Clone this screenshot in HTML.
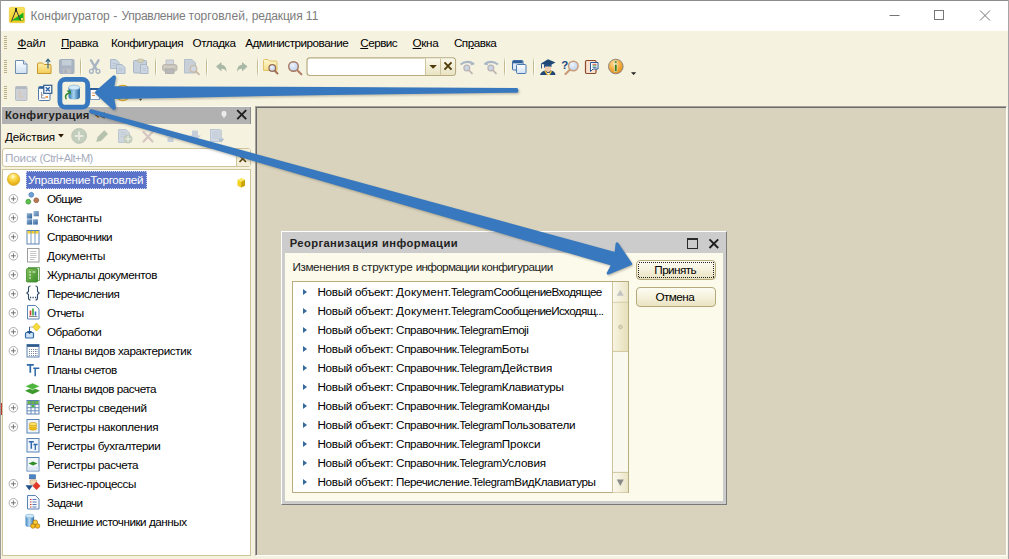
<!DOCTYPE html>
<html lang="ru">
<head>
<meta charset="utf-8">
<title>Конфигуратор</title>
<style>
*{box-sizing:border-box;margin:0;padding:0}
html,body{width:1009px;height:559px;overflow:hidden;background:#f5f2e0}
body{position:relative;font-family:"Liberation Sans","DejaVu Sans",sans-serif;font-size:11.7px;color:#000;-webkit-font-smoothing:antialiased}
.abs{position:absolute}
.t{position:absolute;white-space:nowrap;line-height:1}
#titlebar{left:0;top:0;width:1009px;height:31px;background:#fff}
#title{left:30.6px;top:9.8px;font-size:12px;color:#7c7c7c}
#wintop{left:0;top:0;width:1009px;height:1px;background:#8d8d8d}
#winleft{left:0;top:0;width:1px;height:559px;background:#9a9a9a}
#winright{left:1008px;top:0;width:1px;height:559px;background:#a5a5a5}
.menu{top:36.5px;font-size:11.7px;color:#000}
.menu u{text-decoration:underline;text-underline-offset:1px}
.grip{position:absolute;width:3px;background:repeating-linear-gradient(to bottom,#b9ae86 0,#b9ae86 1px,transparent 1px,transparent 2px)}
.sep{position:absolute;width:1px;background:linear-gradient(to bottom,rgba(196,186,142,0),#c4ba8e 25%,#c4ba8e 75%,rgba(196,186,142,0))}.sep:after{content:"";position:absolute;left:1px;top:0;width:1px;height:100%;background:linear-gradient(to bottom,rgba(255,255,250,0),#fffffa 25%,#fffffa 75%,rgba(255,255,250,0))}
#work{left:255px;top:106px;width:752px;height:450px;background:#d9d3bd;border-top:1px solid #a3a199;border-left:1px solid #a3a199;border-right:1px solid #fff;border-bottom:1px solid #fff;box-shadow:inset 1px 1px 0 #6b6b6b}
#phead{left:2px;top:107px;width:249px;height:17px;background:#b1b1b1}
#ptitle{left:5px;top:109.6px;font-size:11.2px;font-weight:bold;color:#222}
#search{left:2px;top:148px;width:249px;height:19px;background:#fff;border:1px solid #cfc59a;border-radius:3px}
#searchbtn{left:236px;top:149px;width:14px;height:17px;background:#f3efda;border-left:1px solid #cfc59a}
#ph{left:5px;top:152.3px;font-size:11.7px;color:#a6acbd}
#tree{left:2px;top:169px;width:249px;height:387px;background:#fff;border:1px solid #cfc59a}
.row{position:absolute;left:47px;font-size:11.7px;color:#000;white-space:nowrap;line-height:1}
#sel{left:26px;top:170.500px;width:121px;height:18.500px;background:#5a72c8;border:1px dotted #c9d0ee}
#dlg{left:281px;top:231px;width:446px;height:274px;background:#cccccc;border-top:1px solid #fff;border-left:1px solid #fff;border-right:1px solid #7c7c7c;border-bottom:1px solid #787878}
#dbody{left:285px;top:253px;width:438px;height:248px;background:#fcfaeb}
#dtitle{left:289.7px;top:238.4px;font-size:11.2px;font-weight:bold;color:#222}
#dlabel{left:292.4px;top:260.7px;font-size:11.7px;color:#222}
#list{left:292px;top:281px;width:337px;height:212px;background:#fff;border:1px solid #b9ad80}
.li{position:absolute;left:317.5px;font-size:11.7px;color:#000;white-space:nowrap;line-height:1}
.tri{position:absolute;left:303.2px;width:0;height:0;border-left:4.6px solid #366a9a;border-top:3.9px solid transparent;border-bottom:3.9px solid transparent}
.btn{position:absolute;left:636px;width:80px;height:20px;border:1px solid #b5a97b;border-radius:4px;background:linear-gradient(#fdfcf3,#f4f0d9 55%,#e9e3c2);font-size:11.7px;text-align:center;line-height:18px;color:#222}
.lat{font-size:11px}
/*FIT*/
#m1{letter-spacing:-0.188px}
#m2{letter-spacing:-0.417px}
#m3{letter-spacing:-0.536px}
#m4{letter-spacing:-0.458px}
#m5{letter-spacing:-0.497px}
#m6{letter-spacing:-0.524px}
#m7{letter-spacing:-0.343px}
#m8{letter-spacing:-0.484px}
#ptitle{letter-spacing:0.294px}
#act{letter-spacing:-0.152px}
#r0{letter-spacing:-0.274px}
#r1{letter-spacing:-0.807px}
#r2{letter-spacing:-0.339px}
#r3{letter-spacing:-0.528px}
#r4{letter-spacing:-0.228px}
#r5{letter-spacing:-0.417px}
#r6{letter-spacing:-0.534px}
#r7{letter-spacing:-0.651px}
#r8{letter-spacing:-0.480px}
#r9{letter-spacing:-0.368px}
#r10{letter-spacing:-0.489px}
#r11{letter-spacing:-0.468px}
#r12{letter-spacing:-0.307px}
#r13{letter-spacing:-0.330px}
#r14{letter-spacing:-0.363px}
#r15{letter-spacing:-0.335px}
#r16{letter-spacing:-0.382px}
#r17{letter-spacing:-0.625px}
#r18{letter-spacing:-0.485px}
#dtitle{letter-spacing:0.412px}
#bt1{letter-spacing:-0.565px}
#bt2{letter-spacing:-0.540px}
#l0a{letter-spacing:-0.317px}
#l0b{letter-spacing:0.134px}
#l0c{letter-spacing:-0.369px}
#l0d{letter-spacing:-0.621px}
#l1a{letter-spacing:-0.317px}
#l1b{letter-spacing:0.134px}
#l1c{letter-spacing:-0.369px}
#l1d{letter-spacing:-0.648px}
#l2a{letter-spacing:-0.317px}
#l2b{letter-spacing:-0.376px}
#l2c{letter-spacing:-0.369px}
#l2d{letter-spacing:-0.567px}
#l3a{letter-spacing:-0.317px}
#l3b{letter-spacing:-0.376px}
#l3c{letter-spacing:-0.369px}
#l3d{letter-spacing:-0.218px}
#l4a{letter-spacing:-0.317px}
#l4b{letter-spacing:-0.376px}
#l4c{letter-spacing:-0.369px}
#l4d{letter-spacing:-0.102px}
#l5a{letter-spacing:-0.317px}
#l5b{letter-spacing:-0.376px}
#l5c{letter-spacing:-0.369px}
#l5d{letter-spacing:-0.342px}
#l6a{letter-spacing:-0.317px}
#l6b{letter-spacing:-0.376px}
#l6c{letter-spacing:-0.369px}
#l6d{letter-spacing:-0.262px}
#l7a{letter-spacing:-0.317px}
#l7b{letter-spacing:-0.376px}
#l7c{letter-spacing:-0.369px}
#l7d{letter-spacing:-0.223px}
#l8a{letter-spacing:-0.317px}
#l8b{letter-spacing:-0.376px}
#l8c{letter-spacing:-0.369px}
#l8d{letter-spacing:-0.072px}
#l9a{letter-spacing:-0.317px}
#l9b{letter-spacing:-0.376px}
#l9c{letter-spacing:-0.369px}
#l9d{letter-spacing:-0.102px}
#l10a{letter-spacing:-0.317px}
#l10b{letter-spacing:-0.472px}
#l10c{letter-spacing:-0.369px}
#l10d{letter-spacing:-0.389px}
#dl1{letter-spacing:-0.381px}
#dl2{letter-spacing:-0.284px}
#dl3{letter-spacing:-0.171px}
#dl4{letter-spacing:-0.676px}
#dl5{letter-spacing:-0.473px}
#t1{letter-spacing:0.027px}
#t2{letter-spacing:0.478px}
#t3{letter-spacing:-0.277px}
#t4{letter-spacing:0.049px}
#t5{letter-spacing:-0.158px}
#t6{letter-spacing:0.266px}
#ph1{letter-spacing:-0.173px}
#ph2{letter-spacing:-0.515px}
/*ENDFIT*/
</style>
</head>
<body>
<div id="titlebar" class="abs"></div>
<div id="title" class="t"><span id="t1">Конфигуратор </span><span id="t2">- </span><span id="t3">Управление </span><span id="t4">торговлей, </span><span id="t5">редакция </span><span id="t6">11</span></div>

<!-- menu -->
<div class="grip" style="left:4px;top:36px;height:14px"></div>
<div class="t menu" id="m1" style="left:17.5px"><u>Ф</u>айл</div>
<div class="t menu" id="m2" style="left:61px"><u>П</u>равка</div>
<div class="t menu" id="m3" style="left:111px">Конфигурация</div>
<div class="t menu" id="m4" style="left:192.5px">Отладка</div>
<div class="t menu" id="m5" style="left:245.2px">Администрирование</div>
<div class="t menu" id="m6" style="left:360.3px"><u>С</u>ервис</div>
<div class="t menu" id="m7" style="left:412.6px"><u>О</u>кна</div>
<div class="t menu" id="m8" style="left:453.9px">Сп<u>р</u>авка</div>

<!-- toolbars -->
<div class="grip" style="left:4px;top:60px;height:14px"></div>
<div class="grip" style="left:4px;top:86px;height:14px"></div>
<div class="sep" style="left:80px;top:57px;height:20px"></div><div class="sep" style="left:155px;top:57px;height:20px"></div><div class="sep" style="left:205.5px;top:57px;height:20px"></div><div class="sep" style="left:256.5px;top:57px;height:20px"></div><div class="sep" style="left:504px;top:57px;height:20px"></div><div class="sep" style="left:532.5px;top:57px;height:20px"></div><!--TB--><svg id="tbicons" class="abs" style="left:0;top:0" width="1009" height="170" viewBox="0 0 1009 170">
<defs>
<linearGradient id="gDoc" x1="0" y1="0" x2="0" y2="1"><stop offset="0" stop-color="#ffffff"/><stop offset="1" stop-color="#cfe0f2"/></linearGradient>
<linearGradient id="gFold" x1="0" y1="0" x2="0" y2="1"><stop offset="0" stop-color="#fdf0ae"/><stop offset="1" stop-color="#f3cc58"/></linearGradient>
<linearGradient id="gFoldL" x1="0" y1="0" x2="0" y2="1"><stop offset="0" stop-color="#fef8d0"/><stop offset="1" stop-color="#f5de88"/></linearGradient>
<linearGradient id="gBtn" x1="0" y1="0" x2="0" y2="1"><stop offset="0" stop-color="#fbf9ec"/><stop offset="1" stop-color="#e9e3c3"/></linearGradient>
<linearGradient id="gCyl" x1="0" y1="0" x2="1" y2="0"><stop offset="0" stop-color="#2f78b8"/><stop offset="0.45" stop-color="#a8d3ee"/><stop offset="1" stop-color="#1d5f9c"/></linearGradient>
<radialGradient id="gInfo" cx="0.4" cy="0.3" r="0.8"><stop offset="0" stop-color="#fde3a8"/><stop offset="0.5" stop-color="#f5ac3e"/><stop offset="1" stop-color="#d9831a"/></radialGradient>
<radialGradient id="gGlass" cx="0.4" cy="0.35" r="0.7"><stop offset="0" stop-color="#eef4fc"/><stop offset="1" stop-color="#b9cdea"/></radialGradient>
</defs>
<!-- ===== toolbar 1 ===== -->
<!-- new doc -->
<path d="M15.5 60.5h8l3.5 3.5v9.5h-11.5z" fill="url(#gDoc)" stroke="#6f8cae" stroke-width="1"/>
<path d="M23.5 60.5v3.5h3.5" fill="#e4edf7" stroke="#6f8cae" stroke-width="1"/>
<!-- open folder -->
<path d="M37.5 73.5v-9.5q0-1 1-1h4l1.5 1.5h6q1 0 1 1v8z" fill="url(#gFold)" stroke="#c9992c" stroke-width="1"/>
<path d="M48 68.500v-9M45.800 61.800l2.200-2.600l2.200 2.600" fill="none" stroke="#2e5f7d" stroke-width="1.100"/>
<!-- save disabled -->
<rect x="59.5" y="59.5" width="14.5" height="14" rx="1" fill="#aab4c2" stroke="#a3aebc"/>
<rect x="62" y="60" width="9.5" height="5.5" fill="#c3ced9"/>
<rect x="63" y="68.5" width="8" height="5" fill="#bcbfc4"/>
<rect x="64.5" y="69.5" width="2" height="3.5" fill="#a3aebc"/>
<!-- scissors disabled -->
<g fill="none" stroke="#a9b4c3" stroke-width="1.8" stroke-linecap="round">
<path d="M91 60.300l5.500 9M98.500 60.300l-5.500 9" stroke-width="2.300"/>
<circle cx="91.400" cy="71.300" r="1.900" stroke-width="1.400"/><circle cx="98" cy="71.300" r="1.900" stroke-width="1.400"/>
</g>
<!-- copy disabled -->
<path d="M110.5 59.5h5.5l3 3v6h-8.500z" fill="#c9d2df" stroke="#aab9c9"/>
<path d="M116.500 64.500h5.5l3 3v6h-8.500z" fill="#c9d2df" stroke="#aab9c9"/>
<path d="M112.500 63.500h4M112.500 65.500h3M118.500 68.500h4M118.500 70.500h4" stroke="#b3c0cf" stroke-width="0.8"/>
<!-- paste disabled -->
<rect x="133.500" y="60.500" width="13" height="12.500" rx="1" fill="#c6d0dc" stroke="#a9b7c7"/>
<rect x="137.500" y="59.200" width="6" height="3" rx="1" fill="#d8d5bc" stroke="#b9b59b" stroke-width="0.8"/>
<path d="M140.500 64.500h5l2.500 2.500v6.500h-7.500z" fill="#cdd6e2" stroke="#a9b7c7"/>
<path d="M142.500 68.500h3.500M142.500 70.500h3.500" stroke="#b3c0cf" stroke-width="0.8"/>
<!-- printer disabled -->
<rect x="166" y="60" width="7.500" height="5" fill="#d3d6da" stroke="#b9bdc3" stroke-width="0.8"/>
<rect x="162.500" y="64.500" width="14.500" height="6.500" rx="2" fill="#c8c4bb" stroke="#b5b1a8" stroke-width="0.8"/>
<rect x="165.500" y="69" width="8.500" height="4.500" fill="#b8b8b8" stroke="#a9a9a9" stroke-width="0.8"/>
<path d="M164 67h11" stroke="#ddd6c8" stroke-width="1"/>
<!-- preview disabled -->
<path d="M184.500 59.500h7.500l3.500 3.500v10h-11z" fill="#c8cfd7" stroke="#b3bfcc"/>
<circle cx="193.500" cy="68.800" r="3.300" fill="#cfd8e2" stroke="#c9b7a2" stroke-width="1.2"/>
<path d="M196 71.500l3 2.800" stroke="#c9b7a2" stroke-width="1.800" stroke-linecap="round"/>
<!-- undo / redo disabled -->
<path d="M216 66.500l5.500-4.500v2.800q5 0.200 5 7.200q-1.500-3.300-5-3.200v2.700z" fill="#a9b9a5"/>
<path d="M247.500 66.500l-5.500-4.500v2.800q-5 0.200-5 7.200q1.500-3.300 5-3.200v2.700z" fill="#a9b9a5"/>
<!-- find in folder -->
<path d="M263.500 70.500v-10q0-1 1-1h3.500l1.500 1.500h6.500q1 0 1 1v8.500z" fill="url(#gFoldL)" stroke="#e2c266" stroke-width="1"/>
<circle cx="272.300" cy="68" r="3.300" fill="url(#gGlass)" stroke="#9a6c55" stroke-width="1.300"/>
<path d="M274.800 70.700l2.700 2.800" stroke="#a3745c" stroke-width="2" stroke-linecap="round"/>
<!-- magnifier -->
<circle cx="293.500" cy="66.500" r="4.800" fill="url(#gGlass)" stroke="#a67861" stroke-width="1.400"/>
<path d="M297.300 70.300l4 4" stroke="#b38368" stroke-width="2.200" stroke-linecap="round"/>
<!-- search input -->
<rect x="307" y="57.800" width="148.500" height="17.700" rx="3" fill="#fff" stroke="#b7ab7f" stroke-width="1.200"/>
<path d="M425.500 58.400h27q2.400 0 2.400 2.400v11.700q0 2.400-2.400 2.400h-27z" fill="url(#gBtn)"/>
<path d="M425.500 58.400v16.500M440.500 58.400v16.500" stroke="#cfc59c" stroke-width="1"/>
<path d="M429.300 65h7.600l-3.800 3.800z" fill="#4f3c08"/>
<path d="M444.500 62.300l7 7.400M451.500 62.300l-7 7.400" stroke="#4f3c08" stroke-width="1.900"/>
<!-- find next / prev disabled -->
<g fill="none" stroke="#a9b6c6">
<circle cx="466.800" cy="68" r="2.900" fill="#cbd5e2" stroke="#b9b3b8" stroke-width="1.200"/>
<path d="M469 70.300l3 3" stroke="#c2b6b3" stroke-width="1.800" stroke-linecap="round"/>
<path d="M460.500 64.500q6.500-5 13.500-0.500" stroke-width="2"/><path d="M471.500 61.500l3 3l-4 0.800z" fill="#a9b6c6" stroke="none"/>
<circle cx="490.800" cy="68" r="2.900" fill="#cbd5e2" stroke="#b9b3b8" stroke-width="1.200"/>
<path d="M493 70.300l3 3" stroke="#c2b6b3" stroke-width="1.800" stroke-linecap="round"/>
<path d="M498 64.500q-6.500-5-13.500-0.500" stroke-width="2"/><path d="M487 61.500l-3 3l4 0.800z" fill="#a9b6c6" stroke="none"/>
</g>
<!-- windows -->
<rect x="512.500" y="60.500" width="10.500" height="9.500" rx="1" fill="#dfeaf6" stroke="#3f6da6"/>
<rect x="513" y="61" width="9.500" height="2.300" fill="#2f5f9a"/>
<rect x="516.500" y="64.500" width="9.500" height="9" rx="1" fill="url(#gDoc)" stroke="#4a78b0"/>
<!-- graduate -->
<path d="M541 63.500l7-4.300l7.500 3.300l-7 3.500z" fill="#1f4876"/>
<path d="M544 64.500v3l4 1.500l3.500-2v-3z" fill="#234f80"/>
<path d="M541.500 63.500v5" stroke="#1f4876" stroke-width="0.900"/>
<path d="M545 66.500q-1 3 0.500 5.500l1.500 1.500h3l1-3.500v-3.500z" fill="#f2cdb0"/>
<path d="M540 75q1-4 5.500-4.500l2.500 2l3-2q4 0.500 4.500 4.500z" fill="#1f4876"/>
<path d="M545 70.800l2.800 4.200M551.500 70.800l-2.500 4.200" stroke="#f2c230" stroke-width="1.400"/>
<path d="M547 73l1.500 2l1.500-2z" fill="#fff"/>
<!-- ? magnifier -->
<circle cx="573.300" cy="66" r="4.800" fill="url(#gGlass)" stroke="#c99b76" stroke-width="1.400"/>
<path d="M569.800 69.800l-4.300 4.200" stroke="#c99b76" stroke-width="2.200" stroke-linecap="round"/>
<text x="561.300" y="68.500" font-family="Liberation Sans, sans-serif" font-weight="bold" font-size="11.500" fill="#1f4a82">?</text>
<!-- book -->
<rect x="585.500" y="60.500" width="10.500" height="13" rx="1.200" fill="#fbe2cf" stroke="#8c4a2b" stroke-width="1.200"/>
<path d="M590.500 62.500h7.500v6.500h-5l-2.500 2.500z" fill="#fff" stroke="#2f5a9a" stroke-width="1"/>
<path d="M592.500 64.300h4" stroke="#d23a2a" stroke-width="0.900"/><path d="M592.500 65.800h4" stroke="#3a9a3a" stroke-width="0.900"/><path d="M592.500 67.300h4" stroke="#2f5a9a" stroke-width="0.900"/>
<!-- info -->
<circle cx="615.800" cy="66.500" r="7.300" fill="url(#gInfo)" stroke="#8e8a86" stroke-width="1"/>
<circle cx="615.800" cy="62" r="1.300" fill="#3d7f1d" stroke="#f3f7e8" stroke-width="0.500"/>
<rect x="614.700" y="64.300" width="2.300" height="7.200" fill="#3d7f1d" stroke="#f3f7e8" stroke-width="0.500"/>
<path d="M631 72.300h5.200l-2.600 2.600z" fill="#222"/>
<!-- ===== toolbar 2 ===== -->
<rect x="15.500" y="86.500" width="11.500" height="14" rx="1" fill="#cdd0d4" stroke="#b6bdc5"/>
<rect x="16" y="87" width="10.500" height="2" fill="#b3b9c0"/>
<path d="M19.500 91v6h4M19.500 93.500h2" fill="none" stroke="#d9c2b0" stroke-width="0.900"/>
<rect x="38.500" y="86.500" width="11.500" height="14" rx="1" fill="#fbfcfe" stroke="#4f7cab"/>
<rect x="39" y="87" width="10.500" height="1.800" fill="#2f5f9a"/>
<path d="M41.500 92v6h4M41.500 95h2" fill="none" stroke="#8a8a9a" stroke-width="0.900"/>
<rect x="45.500" y="96" width="2.500" height="2" fill="#f0a050"/>
<rect x="43.800" y="85.300" width="8" height="8" fill="#fff" stroke="#2c5a8c" stroke-width="1.200"/>
<path d="M45.800 87.300l4 4M49.800 87.300l-4 4" stroke="#2f68ad" stroke-width="1.500"/>
<!-- db icon -->
<path d="M68.500 87.500v9.500q0 2.500 5.700 2.500t5.700-2.500v-9.500z" fill="url(#gCyl)"/>
<ellipse cx="74.200" cy="87.500" rx="5.700" ry="2.400" fill="#d2e9f8" stroke="#6fa6d2" stroke-width="0.600"/>
<path d="M66.300 99.300q-2.300-4.800 2.500-6" fill="none" stroke="#2c862c" stroke-width="1.500"/>
<path d="M66.500 90.500h4.300v4.300z" fill="#2c862c"/>
<!-- hidden icons behind arrow -->
<rect x="90.500" y="88.500" width="9" height="11" fill="#fff" stroke="#7f9fc0"/>
<rect x="90" y="88" width="10" height="2" fill="#2f5f9a"/>
<path d="M92 93h3M92 95.500h3" stroke="#e09a50" stroke-width="1"/>
<circle cx="122.800" cy="92.900" r="7.600" fill="none" stroke="#d9a520" stroke-width="1.300"/>
<path d="M138.700 98.800h3.600l-1.800 1.900z" fill="#3a2a10"/>
<!-- panel header -->
<rect x="2" y="106" width="249" height="1" fill="#fbfaf0"/><rect x="2" y="107" width="249" height="17" fill="#b1b1b1"/><rect x="250" y="107" width="1" height="17" fill="#8f8f8f"/>
<path d="M95 114.500l4 3M98 112.500l3 1.500l4-1M100 116l5 2" stroke="#3a2a1a" stroke-width="1.200" fill="none"/>
<path d="M96 116.500l3 1.500M101 114l3 0.500" stroke="#c98a30" stroke-width="0.800" fill="none"/>
<rect x="222.200" y="111.500" width="3.600" height="4.600" rx="1.200" fill="#e9e9e9" stroke="#fafafa" stroke-width="1"/>
<path d="M224 116v2" stroke="#f2f2f2" stroke-width="1"/>
<path d="M237.200 110.200l9 9M246.200 110.200l-9 9" stroke="#1f1f1f" stroke-width="1.900"/>
<!-- actions bar icons -->
<path d="M58.100 134h5.800l-2.900 3.400z" fill="#2a1a00"/>
<circle cx="79.100" cy="135.900" r="7.500" fill="#c3cdbb" stroke="#b9c2b8" stroke-width="0.800"/>
<path d="M79.100 131.600v8.600M74.800 135.900h8.600" stroke="#e6eae1" stroke-width="2"/>
<path d="M96.300 141.900l1.300-4.900l6.700-6.700l3.700 3.700l-6.700 6.700z" fill="#b5c2ad"/>
<path d="M118.500 129.500h7.500l3.500 3.500v9.500h-11z" fill="#cfd6de" stroke="#bcc8d4"/>
<path d="M120.500 132.500h5M120.500 134.500h6M120.500 136.500h4" stroke="#bcc8d4" stroke-width="0.800"/>
<circle cx="128" cy="139" r="4.600" fill="#c3cdbb"/>
<path d="M128 136.300v5.400M125.300 139h5.400" stroke="#e6eae1" stroke-width="1.500"/>
<path d="M143.500 132l9 9.500M152.500 132l-9 9.500" stroke="#d6c6c1" stroke-width="2.200" stroke-linecap="round"/>
<path d="M165.500 136.500h3v-3h5v3h3l-5.500-6z" fill="#c5ced9"/><rect x="167.500" y="137" width="6" height="5" fill="#c5ced9"/>
<path d="M192 130.500h6v5h3l-6 5.500l-6-5.500h3z" fill="#c5ced9"/>
<rect x="210.500" y="129.500" width="9.500" height="12" fill="#d3dae3" stroke="#bcc8d4"/>
<path d="M212 132h6.500M212 134h6.500M212 136h6.500M212 138h6.500" stroke="#b9c5d2" stroke-width="0.800"/>
<path d="M221.200 130v11M218.800 139l2.400 3.200l2.400-3.200z" stroke="#b3c0cf" fill="#b3c0cf" stroke-width="1"/>
</svg>
<!--ENDTB-->

<!-- workspace -->
<div id="work" class="abs"></div>

<!-- left panel -->
<div id="ptitle" class="t">Конфигурация</div>
<div class="t" id="act" style="left:5px;top:130.5px;font-size:11.7px;color:#000">Действия</div>
<div id="search" class="abs"></div>
<div id="searchbtn" class="abs"></div>
<div id="ph" class="t"><span id="ph1">Поиск </span><span id="ph2" class="lat">(Ctrl+Alt+M)</span></div>
<div id="tree" class="abs"></div>
<div id="sel" class="abs"></div>
<div class="row" id="r0" style="left:28px;top:173.9px;color:#fff">УправлениеТорговлей</div>
<div class="row" id="r1" style="top:192.8px">Общие</div>
<div class="row" id="r2" style="top:211.8px">Константы</div>
<div class="row" id="r3" style="top:230.8px">Справочники</div>
<div class="row" id="r4" style="top:249.8px">Документы</div>
<div class="row" id="r5" style="top:268.8px">Журналы документов</div>
<div class="row" id="r6" style="top:287.8px">Перечисления</div>
<div class="row" id="r7" style="top:306.8px">Отчеты</div>
<div class="row" id="r8" style="top:325.8px">Обработки</div>
<div class="row" id="r9" style="top:344.8px">Планы видов характеристик</div>
<div class="row" id="r10" style="top:363.8px">Планы счетов</div>
<div class="row" id="r11" style="top:382.8px">Планы видов расчета</div>
<div class="row" id="r12" style="top:401.8px">Регистры сведений</div>
<div class="row" id="r13" style="top:420.8px">Регистры накопления</div>
<div class="row" id="r14" style="top:439.8px">Регистры бухгалтерии</div>
<div class="row" id="r15" style="top:458.8px">Регистры расчета</div>
<div class="row" id="r16" style="top:477.8px">Бизнес-процессы</div>
<div class="row" id="r17" style="top:496.8px">Задачи</div>
<div class="row" id="r18" style="top:515.8px">Внешние источники данных</div>

<!--TREE--><svg id="treeicons" class="abs" style="left:0;top:168px" width="252" height="391" viewBox="0 168 252 391">
<defs>
<radialGradient id="gBall" cx="0.45" cy="0.28" r="0.75"><stop offset="0" stop-color="#fffbe0"/><stop offset="0.35" stop-color="#fbd94a"/><stop offset="1" stop-color="#e0a106"/></radialGradient>
<linearGradient id="gGreenBook" x1="0" y1="0" x2="1" y2="1"><stop offset="0" stop-color="#86c25a"/><stop offset="1" stop-color="#3b8a2b"/></linearGradient>
<linearGradient id="gSq" x1="0" y1="0" x2="1" y2="1"><stop offset="0" stop-color="#8fb3d6"/><stop offset="1" stop-color="#2f5f96"/></linearGradient>
<linearGradient id="gCyl2" x1="0" y1="0" x2="1" y2="0"><stop offset="0" stop-color="#3f86c2"/><stop offset="0.45" stop-color="#b5d8f0"/><stop offset="1" stop-color="#2a6aa5"/></linearGradient>
<g id="plus"><circle cx="0" cy="0" r="4.300" fill="#fff" stroke="#a6a6a6" stroke-width="0.900"/><path d="M-2.400 0h4.800M0-2.400v4.800" stroke="#686868" stroke-width="0.900"/></g>
</defs>
<!-- root ball -->
<circle cx="13.600" cy="179.300" r="6.200" fill="url(#gBall)" stroke="#d4aa35" stroke-width="0.700"/>
<!-- cube at right -->
<path d="M237.500 180l4-1.800l3.500 1.500v6l-3.800 1.800l-3.700-1.800z" fill="#f2d21e"/>
<path d="M241.200 181.700l3.800-2v6l-3.800 1.800z" fill="#c9a20c"/>
<path d="M237.500 180l4-1.800l3.500 1.500l-3.800 2z" fill="#fbe96a"/>
<!-- plus signs -->
<use href="#plus" x="13.400" y="198.800"/><use href="#plus" x="13.400" y="217.800"/><use href="#plus" x="13.400" y="236.800"/><use href="#plus" x="13.400" y="255.800"/>
<use href="#plus" x="13.400" y="274.800"/><use href="#plus" x="13.400" y="293.800"/><use href="#plus" x="13.400" y="312.800"/><use href="#plus" x="13.400" y="331.800"/>
<use href="#plus" x="13.400" y="350.800"/><use href="#plus" x="13.400" y="407.800"/><use href="#plus" x="13.400" y="426.800"/><use href="#plus" x="13.400" y="483.800"/><use href="#plus" x="13.400" y="502.800"/>
<!-- Общие -->
<circle cx="31.300" cy="194.800" r="2.400" fill="#6fa3d8" stroke="#3f72ab" stroke-width="0.700"/>
<circle cx="28.300" cy="201.700" r="2.400" fill="#5cc04a" stroke="#2f8f2a" stroke-width="0.700"/>
<circle cx="36.300" cy="200.300" r="2.400" fill="#b97a52" stroke="#8a5636" stroke-width="0.700"/>
<!-- Константы -->
<rect x="33.500" y="211" width="5.300" height="5.300" fill="url(#gSq)" opacity="0.850"/>
<rect x="26.800" y="213.300" width="5.300" height="5.300" fill="url(#gSq)"/>
<rect x="26.800" y="219.300" width="5.300" height="5.300" fill="url(#gSq)"/>
<rect x="32.800" y="219.300" width="5" height="5.300" fill="url(#gSq)"/>
<!-- Справочники -->
<rect x="27" y="230.500" width="12" height="13.500" fill="#fff" stroke="#5a84b4" stroke-width="1"/>
<rect x="27.500" y="231" width="11" height="2.600" fill="#f3d132"/>
<path d="M31 231v13M35 231v13" stroke="#6f93bf" stroke-width="0.900"/>
<!-- Документы -->
<rect x="27.500" y="248.500" width="11.500" height="13.500" fill="#fff" stroke="#9c9c9c" stroke-width="1"/>
<path d="M30 251.500h6.500M30 253.500h6.500M30 255.500h6.500M30 257.500h6.500M30 259.500h4.500" stroke="#b9b9b9" stroke-width="0.800"/>
<!-- Журналы -->
<rect x="28.500" y="267.500" width="11" height="13" fill="#d7ead0" stroke="#5a9a44" stroke-width="0.800"/>
<rect x="26.500" y="268.500" width="11" height="13.500" rx="1" fill="url(#gGreenBook)" stroke="#3b8a2b" stroke-width="0.800"/>
<path d="M29 272h2M29 275h2M29 278h2M32.500 272h3" stroke="#e8f5e0" stroke-width="1"/>
<!-- Перечисления -->
<path d="M30.500 286q-2 0-2 2v3.500l-1.700 1.500l1.700 1.500v3.500q0 2 2 2M35.500 286q2 0 2 2v3.500l1.700 1.500l-1.700 1.500v3.500q0 2-2 2" fill="none" stroke="#2f4a66" stroke-width="1.100"/>
<path d="M30 297.500h1.200M32.500 297.500h1.200M35 297.500h1.200" stroke="#2f4a66" stroke-width="1.300"/>
<!-- Отчеты -->
<path d="M27.500 305.500h8l3.500 3.500v10h-11.500z" fill="#fff" stroke="#5a84b4"/>
<path d="M30.500 315.500v-5" stroke="#d83a2a" stroke-width="1.600"/><path d="M33 315.500v-7" stroke="#3aa33a" stroke-width="1.600"/><path d="M35.500 315.500v-4" stroke="#3a6ac8" stroke-width="1.600"/>
<path d="M29 316.500h8.500" stroke="#6a6a6a" stroke-width="0.800"/>
<!-- Обработки -->
<path d="M36.500 323l3.800 4l-3.800 4l-3.800-4z" fill="#f8dc3a" stroke="#d9b21a" stroke-width="0.700"/>
<rect x="25.500" y="332.500" width="8" height="5.500" rx="1" fill="#cfe2f5" stroke="#2f6aa8" stroke-width="1.200"/>
<path d="M29.500 327v6M27.500 331.500l2 2.300l2-2.300z" stroke="#1f4f86" fill="#1f4f86" stroke-width="0.900"/>
<path d="M29.500 327h3" stroke="#555" stroke-width="0.900" stroke-dasharray="1 1"/>
<!-- Планы видов характеристик -->
<rect x="27" y="344.500" width="12" height="12.500" fill="#fff" stroke="#5a84b4"/>
<rect x="27" y="344.500" width="12" height="2.400" fill="#2f5a8c"/>
<path d="M29.500 349v7M31.500 349v7M33.500 349v7M35.500 349v7M37 349v7" stroke="#6a7a9a" stroke-width="0.900" stroke-dasharray="1 1"/>
<!-- Планы счетов -->
<path d="M26.800 364.800h7M30.300 364.800v8" stroke="#2f6aa8" stroke-width="1.700" fill="none"/>
<path d="M33.300 368.300h6M35.200 368.300v8" stroke="#2f6aa8" stroke-width="1.500" fill="none"/>
<!-- Планы видов расчета -->
<path d="M32.500 387.500l7.500 3.300l-7.500 3.400l-7.500-3.400z" fill="#3b9a2b"/>
<path d="M32.500 383l7.500 3.300l-7.500 3.400l-7.500-3.400z" fill="#4cb43a" stroke="#fff" stroke-width="0.600"/>
<!-- Регистры сведений -->
<rect x="27" y="400.500" width="12" height="13.500" fill="#fff" stroke="#5a84b4"/>
<rect x="27.500" y="401" width="11" height="3" fill="#6ab24a"/>
<path d="M31 401v13M35 401v13M27 404.500h12M27 407.700h12M27 410.800h12" stroke="#5a84b4" stroke-width="0.900"/>
<rect x="31.500" y="405" width="3" height="2.300" fill="#4cb43a"/>
<!-- Регистры накопления -->
<rect x="27" y="419.500" width="12" height="13.500" fill="#eef4fb" stroke="#5a84b4"/>
<ellipse cx="33" cy="428.500" rx="3.800" ry="1.700" fill="#f5c518" stroke="#c9950a" stroke-width="0.600"/>
<ellipse cx="33" cy="426.300" rx="3.800" ry="1.700" fill="#f9d43a" stroke="#c9950a" stroke-width="0.600"/>
<ellipse cx="33" cy="424.100" rx="3.800" ry="1.700" fill="#fce36a" stroke="#c9950a" stroke-width="0.600"/>
<!-- Регистры бухгалтерии -->
<rect x="27" y="438.500" width="12" height="13.500" fill="#eef4fb" stroke="#5a84b4"/>
<path d="M28.800 441.800h5M31.300 441.800v7" stroke="#2f6aa8" stroke-width="1.500" fill="none"/>
<path d="M33.500 444.500h4M35.300 444.500v5.500" stroke="#2f6aa8" stroke-width="1.300" fill="none"/>
<!-- Регистры расчета -->
<rect x="27" y="457.500" width="12" height="13.500" fill="#f4f8fc" stroke="#5a84b4"/>
<path d="M33 461.500l4.500 2l-4.500 2l-4.500-2z" fill="#2f8f2a"/>
<rect x="27.500" y="466.500" width="11" height="4" fill="#dfe9f4"/>
<!-- Бизнес-процессы -->
<rect x="29.500" y="474.800" width="6" height="4" fill="#4a86c8" stroke="#2f5f96" stroke-width="0.600"/>
<rect x="30" y="479.800" width="6.500" height="4.400" rx="1" fill="#f3d9b5" stroke="#c9a070" stroke-width="0.700"/>
<path d="M25.500 485.300h7.500l-3.750 4.900z" fill="#244f86"/>
<path d="M36.500 481.700l4 4.200l-4 4.200l-4-4.200z" fill="#e0392a"/>
<!-- Задачи -->
<path d="M27.500 495.500h8l3.500 3.500v10h-11.500z" fill="#f7f9fc" stroke="#5a84b4"/>
<path d="M30 499.500h1.500M30 502h1.500M30 504.500h1.500M30 507h1.500" stroke="#d23a2a" stroke-width="1"/>
<path d="M32.500 499.500h4M32.500 502h4M32.500 504.500h4M32.500 507h4" stroke="#5a7ab8" stroke-width="1"/>
<!-- Внешние источники -->
<path d="M25.500 516v9q0 2 4.300 2t4.300-2v-9z" fill="url(#gCyl2)"/>
<ellipse cx="29.800" cy="516" rx="4.300" ry="1.900" fill="#cfe6f7" stroke="#6fa6d2" stroke-width="0.500"/>
<circle cx="33" cy="526" r="2.300" fill="#f7bd1a" stroke="#a8700a" stroke-width="0.700"/>
<circle cx="37.500" cy="526" r="2.300" fill="#f7bd1a" stroke="#a8700a" stroke-width="0.700"/>
<circle cx="35.300" cy="522.300" r="2.300" fill="#f9cd3a" stroke="#a8700a" stroke-width="0.700"/>
</svg>
<!--ENDTREE-->
<!-- dialog -->
<div id="dlg" class="abs"></div>
<div id="dbody" class="abs"></div>
<div id="dtitle" class="t">Реорганизация информации</div>
<div id="dlabel" class="t"><span id="dl1">Изменения </span><span id="dl2">в </span><span id="dl3">структуре </span><span id="dl4">информации </span><span id="dl5">конфигурации</span></div>
<div id="list" class="abs"></div>

<div class="tri" style="top:289.1px"></div><div class="tri" style="top:308.1px"></div><div class="tri" style="top:327.1px"></div><div class="tri" style="top:346.1px"></div><div class="tri" style="top:365.1px"></div><div class="tri" style="top:384.1px"></div><div class="tri" style="top:403.1px"></div><div class="tri" style="top:422.1px"></div><div class="tri" style="top:441.1px"></div><div class="tri" style="top:460.1px"></div><div class="tri" style="top:479.1px"></div>
<div class="li" id="l0" style="top:286.3px"><span id="l0a">Новый объект: </span><span id="l0b">Документ.</span><span id="l0c" class="lat">Telegram</span><span id="l0d">СообщениеВходящее</span></div>
<div class="li" id="l1" style="top:305.3px"><span id="l1a">Новый объект: </span><span id="l1b">Документ.</span><span id="l1c" class="lat">Telegram</span><span id="l1d">СообщениеИсходящ...</span></div>
<div class="li" id="l2" style="top:324.3px"><span id="l2a">Новый объект: </span><span id="l2b">Справочник.</span><span id="l2c" class="lat">Telegram</span><span id="l2d">Emoji</span></div>
<div class="li" id="l3" style="top:343.3px"><span id="l3a">Новый объект: </span><span id="l3b">Справочник.</span><span id="l3c" class="lat">Telegram</span><span id="l3d">Боты</span></div>
<div class="li" id="l4" style="top:362.3px"><span id="l4a">Новый объект: </span><span id="l4b">Справочник.</span><span id="l4c" class="lat">Telegram</span><span id="l4d">Действия</span></div>
<div class="li" id="l5" style="top:381.3px"><span id="l5a">Новый объект: </span><span id="l5b">Справочник.</span><span id="l5c" class="lat">Telegram</span><span id="l5d">Клавиатуры</span></div>
<div class="li" id="l6" style="top:400.3px"><span id="l6a">Новый объект: </span><span id="l6b">Справочник.</span><span id="l6c" class="lat">Telegram</span><span id="l6d">Команды</span></div>
<div class="li" id="l7" style="top:419.3px"><span id="l7a">Новый объект: </span><span id="l7b">Справочник.</span><span id="l7c" class="lat">Telegram</span><span id="l7d">Пользователи</span></div>
<div class="li" id="l8" style="top:438.3px"><span id="l8a">Новый объект: </span><span id="l8b">Справочник.</span><span id="l8c" class="lat">Telegram</span><span id="l8d">Прокси</span></div>
<div class="li" id="l9" style="top:457.3px"><span id="l9a">Новый объект: </span><span id="l9b">Справочник.</span><span id="l9c" class="lat">Telegram</span><span id="l9d">Условия</span></div>
<div class="li" id="l10" style="top:476.3px"><span id="l10a">Новый объект: </span><span id="l10b">Перечисление.</span><span id="l10c" class="lat">Telegram</span><span id="l10d">ВидКлавиатуры</span></div>
<div class="btn" id="b1" style="top:260px"></div><div class="t" id="bt1" style="left:654.3px;top:263.8px">Принять</div>
<div class="btn" id="b2" style="top:287px"></div><div class="t" id="bt2" style="left:655.5px;top:290.6px">Отмена</div>

<!--MISC--><svg id="misc" class="abs" style="left:0;top:0" width="1009" height="559" viewBox="0 0 1009 559">
<defs>
<linearGradient id="gApp" x1="0" y1="0" x2="0" y2="1"><stop offset="0" stop-color="#fbe45a"/><stop offset="1" stop-color="#f0c81e"/></linearGradient>
<linearGradient id="gThumb" x1="0" y1="0" x2="1" y2="0"><stop offset="0" stop-color="#f8f4e0"/><stop offset="1" stop-color="#e6dfba"/></linearGradient>
<linearGradient id="gSbBtn" x1="0" y1="0" x2="1" y2="0"><stop offset="0" stop-color="#fbf9ee"/><stop offset="1" stop-color="#ebe5c6"/></linearGradient>
</defs>
<!-- app icon -->
<rect x="9.300" y="7.300" width="15.400" height="15.400" rx="1.500" fill="url(#gApp)" stroke="#e8c63a" stroke-width="0.600"/>
<path d="M11.500 20.500l12-8v8z" fill="#1fb21f"/>
<rect x="21" y="18" width="2" height="2" fill="#f7e27a"/>
<path d="M16 9.500l-4.500 12M16 9.500l4.500 11" stroke="#3a3a3a" stroke-width="1" fill="none"/>
<path d="M16 8v4" stroke="#2a2a2a" stroke-width="1.800"/>
<!-- window controls -->
<path d="M889.500 15.500h10" stroke="#767676" stroke-width="1"/>
<rect x="934.500" y="10.500" width="9" height="9" fill="none" stroke="#767676" stroke-width="1"/>
<path d="M980 10.500l10 10M990 10.500l-10 10" stroke="#767676" stroke-width="1"/>
<!-- search clear x -->
<path d="M239.500 155.500l6.500 6.500M246 155.500l-6.500 6.500" stroke="#5a4510" stroke-width="1.700"/>
<!-- dialog controls -->
<rect x="687.500" y="238.500" width="10" height="10" fill="none" stroke="#2a2a2a" stroke-width="1" shape-rendering="crispEdges"/><rect x="687" y="238" width="11" height="2" fill="#2a2a2a" shape-rendering="crispEdges"/>
<path d="M709.500 239.300l8.700 8.700M718.200 239.300l-8.700 8.700" stroke="#1f1f1f" stroke-width="1.900"/>
<!-- scrollbar -->
<rect x="612.500" y="282" width="15.500" height="210" fill="#faf9f0"/>
<path d="M612.500 282v210.500" stroke="#cfc59c" stroke-width="1"/>
<rect x="613" y="282" width="15" height="20.300" fill="url(#gSbBtn)"/>
<path d="M613 302.300h15" stroke="#cfc59c" stroke-width="1"/>
<path d="M616.800 295.800h7l-3.500-6z" fill="#c3c3c3"/>
<rect x="613" y="302.800" width="15" height="48.300" fill="url(#gThumb)"/>
<path d="M613 351.400h15" stroke="#cfc59c" stroke-width="1"/>
<circle cx="620.500" cy="327" r="1.900" fill="#d8d2b6" stroke="#bdb697" stroke-width="0.700"/>
<rect x="613" y="472.500" width="15" height="20" fill="url(#gSbBtn)"/>
<path d="M613 472.400h15" stroke="#cfc59c" stroke-width="1"/>
<path d="M616.800 479.500h7l-3.500 6.500z" fill="#8a8a8a"/>
<!-- focus rect on button -->
<rect x="638.500" y="262.500" width="75" height="15" fill="none" stroke="#222" stroke-width="1" stroke-dasharray="1 1" shape-rendering="crispEdges"/>
</svg>
<!--ENDMISC-->
<!-- arrows overlay -->
<svg id="arrows" class="abs" style="left:0;top:0" width="1009" height="559" viewBox="0 0 1009 559">
<defs>
<filter id="sh" x="-5%" y="-20%" width="110%" height="140%"><feGaussianBlur stdDeviation="0.8"/></filter>
<g id="ashp">
<path stroke="none" d="M517.300 88L330 87L270 86.700L170 86.600L112 86.200L112 98.900L170 98.100L270 95.900L330 95L517.300 92.700Q519.600 90.400 517.300 88Z"/>
<path d="M97 92.600L114 77.400L112.300 86.500L112.300 98.700L114 107.900Z" stroke-width="4" stroke-linejoin="round"/>
<path stroke="none" d="M90.800 108.900L616 252.200L612 265.800L89.800 113.200Q88 110.700 90.800 108.900Z"/>
<path d="M630.600 263.900L617.100 243.800L616.040 252.210L612.200 265.700L608.200 273.100Z" stroke-width="3" stroke-linejoin="round"/>
</g>
</defs>
<use href="#ashp" fill="#6b6552" stroke="#6b6552" opacity="0.42" filter="url(#sh)" transform="translate(1,1.3)"/>
<use href="#ashp" fill="#3778bf" stroke="#3778bf"/>
<rect x="59.900" y="79.400" width="27.800" height="27.800" rx="5.500" fill="none" stroke="#3778bf" stroke-width="4.800"/>
</svg>

<div class="abs" style="left:0;top:403px;width:2px;height:12px;background:#c23b30"></div>
<div id="wintop" class="abs"></div>
<div id="winleft" class="abs"></div>
<div id="winright" class="abs"></div>
</body>
</html>
